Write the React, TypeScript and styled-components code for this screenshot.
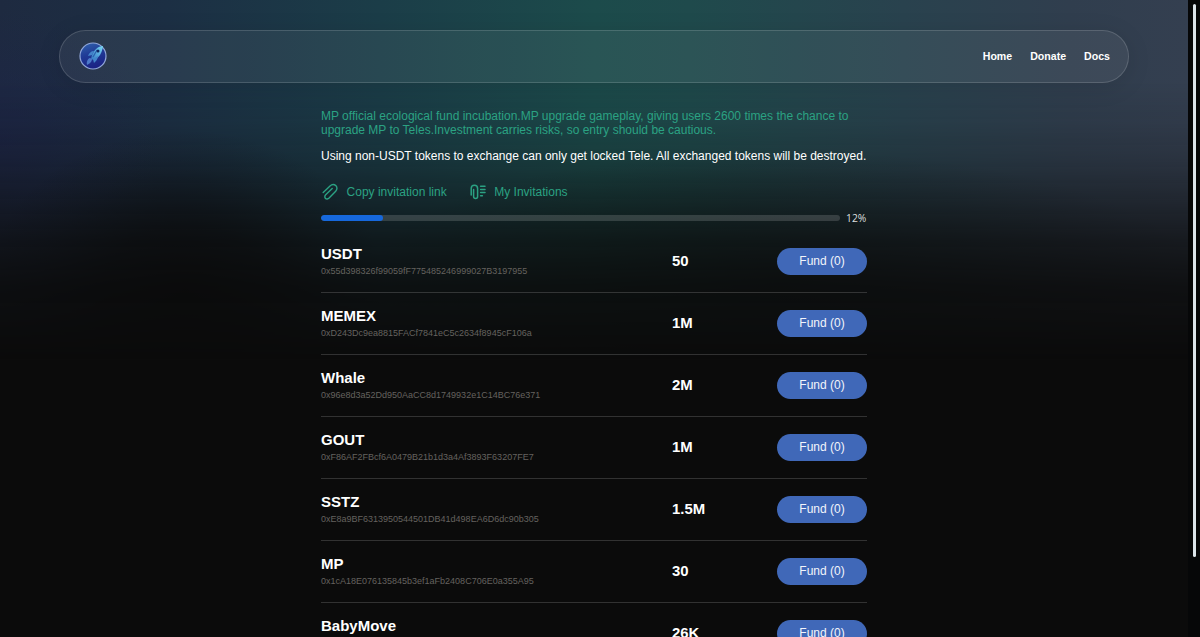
import styled, { createGlobalStyle } from 'styled-components';

const GlobalStyle = createGlobalStyle`
  * {
    box-sizing: border-box;
  }

  body {
    margin: 0;
    background: #0b0b0b;
    overflow: hidden;
  }
`;

const StyledApp = styled.div`
  display: flex;
  height: 100vh;
  overflow: hidden;

  color: #fff;
  font-family: 'Liberation Sans', Arial, sans-serif;
`;

const StyledPage = styled.div`
  position: relative;
  isolation: isolate;
  flex: 1;
  height: 100%;
  padding: 30px 59px 0;
  overflow: hidden;
`;

const StyledGlow = styled.div`
  position: absolute;
  inset: 0 0 auto;
  z-index: -1;
  height: 380px;

  background:
    radial-gradient(ellipse 200px 160px at 185px 290px, rgba(11, 12, 13, 0.85), rgba(11, 12, 13, 0.6) 40%, rgba(11, 12, 13, 0.2) 75%, transparent),
    radial-gradient(ellipse 420px 130px at 780px 280px, rgba(11, 12, 12, 0.5), transparent),
    radial-gradient(ellipse 160px 130px at 0 140px, rgba(27, 33, 74, 0.5), transparent),
    linear-gradient(
      90deg,
      #1e2a40 0%,
      #1c2f44 14%,
      #1b3d48 32%,
      #1c4b4b 50%,
      #1f4a4c 58%,
      #29424e 76%,
      #303e4e 90%,
      #343f50 100%
    );
  mask-image: linear-gradient(
    #000 0,
    #000 80px,
    rgba(0, 0, 0, 0.91) 120px,
    rgba(0, 0, 0, 0.77) 160px,
    rgba(0, 0, 0, 0.54) 200px,
    rgba(0, 0, 0, 0.3) 240px,
    rgba(0, 0, 0, 0.12) 285px,
    transparent 360px
  );
`;

const StyledHeader = styled.header`
  display: flex;
  align-items: center;
  justify-content: space-between;
  height: 52.5px;
  padding: 0 18px 0 19px;

  border: 1px solid rgba(255, 255, 255, 0.15);
  border-radius: 27px;
  background: rgba(255, 255, 255, 0.06);
  box-shadow: 0 4px 24px rgba(0, 0, 0, 0.1);
`;

const StyledNav = styled.nav`
  display: flex;
  gap: 18px;
`;

const StyledNavLink = styled.a`
  color: #fff;
  font-size: 10.6px;
  font-weight: bold;
`;

const StyledContent = styled.main`
  width: 546px;
  margin: 26.5px auto 0;
`;

const StyledNotice = styled.p<{ $accent?: boolean }>`
  margin: 0 0 12px;
  color: ${({ $accent }) => ($accent ? '#2ba283' : '#fff')};
  font-size: 12px;
  line-height: 14px;
`;

const StyledActions = styled.div`
  display: flex;
  gap: 22px;
  margin-top: 20px;
`;

const StyledAction = styled.a`
  display: flex;
  align-items: center;
  gap: 7.6px;
  height: 18px;
  color: #2ba283;
  font-size: 12px;
`;

const StyledProgress = styled.div`
  display: flex;
  align-items: center;
  gap: 6px;
  height: 16px;
  margin-top: 9px;
`;

const StyledTrack = styled.div`
  flex: 1;
  height: 6px;
  border-radius: 3px;
  background: rgba(255, 255, 255, 0.15);
  overflow: hidden;
`;

const StyledFill = styled.div`
  height: 100%;
  border-radius: 3px;
  background: #1668dc;
`;

const StyledPercent = styled.span`
  width: 21px;
  color: #dcdfdf;
  font-family: 'Open Sans', 'Noto Sans', sans-serif;
  font-size: 10.3px;
`;

const StyledList = styled.div`
  margin-top: 5px;
`;

const StyledRow = styled.div`
  display: grid;
  grid-template-columns: 351px 1fr 90px;
  align-items: center;
  height: 61.95px;
  border-bottom: 1px solid rgba(255, 255, 255, 0.16);
`;

const StyledToken = styled.div`
  padding-top: 1px;
`;

const StyledSymbol = styled.div`
  font-size: 15px;
  font-weight: bold;
  line-height: 18px;
`;

const StyledAddress = styled.div`
  min-height: 16px;
  color: #65625f;
  font-size: 9px;
  line-height: 16px;
`;

const StyledAmount = styled.div`
  font-size: 14.9px;
  font-weight: bold;
`;

const StyledFundButton = styled.button`
  height: 27px;
  padding: 0;
  border: 0;
  border-radius: 14px;
  background: #4068b8;
  color: #f2f5fb;
  font-family: inherit;
  font-size: 12px;
`;

const StyledScrollbar = styled.div`
  width: 12px;
  padding: 4px 4px 0 5px;
  background: #060708;
`;

const StyledThumb = styled.div`
  height: 553px;
  border-radius: 2px;
  background: #dce5ea;
`;

const Logo = () => (
  <svg width="28" height="28" viewBox="0 0 28 28">
    <defs>
      <linearGradient id="disc" x1="0" y1="0" x2="0.3" y2="1">
        <stop offset="0" stopColor="#3163ad" />
        <stop offset="0.5" stopColor="#203b96" />
        <stop offset="1" stopColor="#1b2385" />
      </linearGradient>
      <linearGradient id="rocket" x1="1" y1="0" x2="0" y2="1">
        <stop offset="0" stopColor="#79d8f4" />
        <stop offset="1" stopColor="#3477c4" />
      </linearGradient>
    </defs>
    <circle cx="14" cy="14" r="13" fill="url(#disc)" stroke="#91a7da" strokeWidth="1.2" />
    <path d="M24 4C19 4 15 8 13 13l-1 4 3 1c5-2 8-7 9-14z" fill="url(#rocket)" />
    <path d="M15 9c-3 0-5 2-6 5l4-1zM19 14c0 3-2 5-4 7l-1-4z" fill="#4384cb" />
    <path d="M11 16c-2 0-4 4-3 7 2-1 5-3 5-6z" fill="#4c79c9" />
    <path d="M18 8l-4 7" stroke="#2a5fae" strokeWidth="1.2" />
    <circle cx="19" cy="9" r="1.5" fill="#102763" />
  </svg>
);

const ClipIcon = () => (
  <svg width="18" height="18" viewBox="0 0 18 18" fill="none" stroke="currentColor" strokeWidth="1.4" strokeLinecap="round">
    <path d="M2.2 9.5 9 2.9c1.8-1.6 4.2-1.7 5.8-.3 1.6 1.5 1.5 3.9-.1 5.6l-6.6 6.9c-1.1 1.1-2.7 1.2-3.6.3-1-.9-.9-2.5.2-3.6l6.5-6.2" />
  </svg>
);

const InvitationsIcon = () => (
  <svg width="18" height="18" viewBox="0 0 18 18" fill="none" stroke="currentColor" strokeWidth="1.5" strokeLinecap="round">
    <path d="M2.2 12V5.4a3.2 3.2 0 0 1 6.4 0v8.2a2 2 0 0 1-4 0V6.5" />
    <path d="M11.6 3.2h4.4M11.6 6.4h4.4M11.6 9.6h4.4M11.6 12.8h1.8" />
  </svg>
);

const NAV_LINKS = ['Home', 'Donate', 'Docs'];

const PROGRESS = 12;

const TOKENS = [
  { symbol: 'USDT', address: '0x55d398326f99059fF775485246999027B3197955', amount: '50' },
  { symbol: 'MEMEX', address: '0xD243Dc9ea8815FACf7841eC5c2634f8945cF106a', amount: '1M' },
  { symbol: 'Whale', address: '0x96e8d3a52Dd950AaCC8d1749932e1C14BC76e371', amount: '2M' },
  { symbol: 'GOUT', address: '0xF86AF2FBcf6A0479B21b1d3a4Af3893F63207FE7', amount: '1M' },
  { symbol: 'SSTZ', address: '0xE8a9BF6313950544501DB41d498EA6D6dc90b305', amount: '1.5M' },
  { symbol: 'MP', address: '0x1cA18E076135845b3ef1aFb2408C706E0a355A95', amount: '30' },
  { symbol: 'BabyMove', address: '', amount: '26K' },
];

const App = () => {
  return (
    <StyledApp>
      <GlobalStyle />
      <StyledPage>
        <StyledGlow />
        <StyledHeader>
          <Logo />
          <StyledNav>
            {NAV_LINKS.map(link => (
              <StyledNavLink key={link}>{link}</StyledNavLink>
            ))}
          </StyledNav>
        </StyledHeader>
        <StyledContent>
          <StyledNotice $accent>
            MP official ecological fund incubation.MP upgrade gameplay, giving users 2600 times the chance to upgrade
            MP to Teles.Investment carries risks, so entry should be cautious.
          </StyledNotice>
          <StyledNotice>
            Using non-USDT tokens to exchange can only get locked Tele. All exchanged tokens will be destroyed.
          </StyledNotice>
          <StyledActions>
            <StyledAction>
              <ClipIcon />
              Copy invitation link
            </StyledAction>
            <StyledAction>
              <InvitationsIcon />
              My Invitations
            </StyledAction>
          </StyledActions>
          <StyledProgress>
            <StyledTrack>
              <StyledFill style={{ width: `${PROGRESS}%` }} />
            </StyledTrack>
            <StyledPercent>{PROGRESS}%</StyledPercent>
          </StyledProgress>
          <StyledList>
            {TOKENS.map(({ symbol, address, amount }) => (
              <StyledRow key={symbol}>
                <StyledToken>
                  <StyledSymbol>{symbol}</StyledSymbol>
                  <StyledAddress>{address}</StyledAddress>
                </StyledToken>
                <StyledAmount>{amount}</StyledAmount>
                <StyledFundButton>Fund (0)</StyledFundButton>
              </StyledRow>
            ))}
          </StyledList>
        </StyledContent>
      </StyledPage>
      <StyledScrollbar>
        <StyledThumb />
      </StyledScrollbar>
    </StyledApp>
  );
};

export default App;
